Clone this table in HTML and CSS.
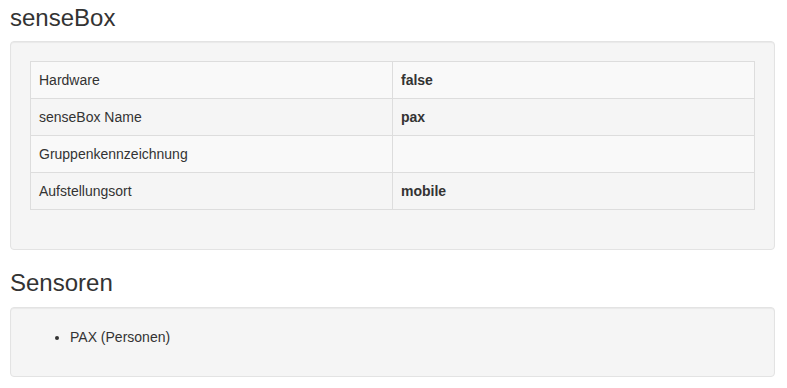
FILE: index.html
```html
<!DOCTYPE html>
<html lang="de">
<head>
<meta charset="utf-8">
<title>senseBox</title>
<link rel="stylesheet" href="styles.css">
</head>
<body>
<div class="container">
  <h3 class="title first">senseBox</h3>
  <div class="well">
    <table class="table">
      <tbody>
        <tr><td>Hardware</td><td><strong>false</strong></td></tr>
        <tr><td>senseBox Name</td><td><strong>pax</strong></td></tr>
        <tr><td>Gruppenkennzeichnung</td><td><strong></strong></td></tr>
        <tr><td>Aufstellungsort</td><td><strong>mobile</strong></td></tr>
      </tbody>
    </table>
  </div>
  <h3 class="title">Sensoren</h3>
  <div class="well">
    <ul class="sensors">
      <li>PAX (Personen)</li>
    </ul>
  </div>
</div>
</body>
</html>
```
FILE: styles.css
```css
html, body {
  margin: 0;
  padding: 0;
  background: #fff;
}

body {
  font-family: "Liberation Sans", Arial, Helvetica, sans-serif;
  font-size: 14px;
  line-height: 20px;
  color: #333;
}

.container {
  padding: 0 12px 0 10px;
}

.title {
  font-size: 24px;
  font-weight: 500;
  line-height: 1.1;
  margin: 20px 0 10px;
  color: #333;
}

.title.first {
  margin-top: 5px;
}

.well {
  background: #f5f5f5;
  border: 1px solid #e3e3e3;
  border-radius: 4px;
  padding: 19px;
  margin-bottom: 20px;
  box-shadow: inset 0 1px 1px rgba(0, 0, 0, 0.05);
  min-height: 20px;
}

.table {
  width: 100%;
  border-collapse: collapse;
  border-spacing: 0;
  margin-bottom: 20px;
  border: 1px solid #ddd;
}

.table td {
  width: 50%;
  padding: 8px;
  line-height: 20px;
  vertical-align: top;
  border: 1px solid #ddd;
}

.table tr:nth-child(odd) {
  background: #f9f9f9;
}

.table strong {
  font-weight: bold;
}

.sensors {
  margin: 0 0 10px;
  padding-left: 40px;
}
```
